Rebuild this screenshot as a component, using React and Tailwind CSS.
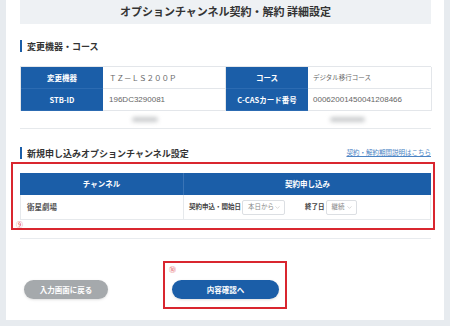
import { ChevronDown } from 'lucide-react';

const jp = "font-['Noto_Sans_CJK_JP','Noto_Sans',sans-serif]";

function Heading({ children }) {
  return (
    <div className="flex items-center h-[12px]">
      <span className="w-[2px] h-[12px] bg-[#1b5ea8]" />
      <span className="ml-[5px] text-[9px] font-bold text-[#333] leading-none">{children}</span>
    </div>
  );
}

function Label({ children }) {
  return (
    <div className="h-[22px] bg-[#1b5ea8] border-b border-[#2c6bb2] flex items-center justify-center text-white font-bold text-[7.5px] whitespace-nowrap">
      {children}
    </div>
  );
}

function Value({ children, pl = 'pl-[6px]' }) {
  return (
    <div className={`h-[22px] bg-white border-r border-b border-[#e3e6ea] flex items-center text-[#666] text-[7.5px] whitespace-nowrap ${pl}`}>
      {children}
    </div>
  );
}

function Select({ label, w }) {
  return (
    <div className={`ml-[1px] h-[15px] border border-[#dcdfe3] rounded-[2px] flex items-center justify-between pl-[5px] pr-[3px] bg-white whitespace-nowrap ${w}`}>
      <span className="text-[6.5px] text-[#888]">{label}</span>
      <ChevronDown size={7} strokeWidth={1.5} className="text-[#aaa] shrink-0" />
    </div>
  );
}

export default function App() {
  return (
    <div className={`w-[450px] h-[326px] bg-[#e7ebef] px-[6px] overflow-hidden ${jp}`}>
      <div className="h-[320px] bg-white pl-[14px] pr-[13px] flex flex-col">
        <div className="h-[24px] bg-[#eef1f4] flex items-center justify-center pb-[2px]">
          <span className="text-[11px] font-bold text-[#333]">オプションチャンネル契約・解約 詳細設定</span>
        </div>

        <div className="mt-[16px]">
          <Heading>変更機器・コース</Heading>
        </div>

        <div className="mt-[14px] grid grid-cols-[82px_123px_82px_124px] border-t border-l border-[#e3e6ea]">
          <Label>変更機器</Label>
          <Value>ＴＺ－ＬＳ２００Ｐ</Value>
          <Label>コース</Label>
          <Value pl="pl-[5px]"><span className="text-[6.5px]">デジタル移行コース</span></Value>
          <Label>STB-ID</Label>
          <Value><span className="font-['Liberation_Sans',sans-serif] text-[8px]">196DC3290081</span></Value>
          <Label>C-CASカード番号</Label>
          <Value pl="pl-[5px]"><span className="font-['Liberation_Sans',sans-serif] text-[8px]">00062001450041208466</span></Value>
        </div>

        <div className="h-[18px] grid grid-cols-[82px_123px_82px_124px] border-b border-[#e6e9ec]">
          <div />
          <div className="flex items-center pl-[30px]">
            <span className="w-[26px] h-[5px] rounded-full bg-[#c9cbcd] blur-[2px]" />
          </div>
          <div />
          <div className="flex items-center pl-[23px]">
            <span className="w-[35px] h-[5px] rounded-full bg-[#c9cbcd] blur-[2px]" />
          </div>
        </div>

        <div className="mt-[18px] flex items-center justify-between">
          <Heading>新規申し込みオプションチャンネル設定</Heading>
          <span className="text-[6.5px] text-[#4a83c4] underline">契約・解約期間説明はこちら</span>
        </div>

        <div className="mt-[3px] -ml-[9px] -mr-[4px] h-[68px] border-2 border-[#d9262f] pt-[9px] pl-[7px] pr-[2px]">
          <div className="grid grid-cols-[164px_1fr]">
            <div className="h-[22px] bg-[#1b5ea8] border-r border-[#3a74b6] flex items-center justify-center text-white font-bold text-[7.5px]">チャンネル</div>
            <div className="h-[22px] bg-[#1b5ea8] flex items-center justify-center text-white font-bold text-[7.5px]">契約申し込み</div>
            <div className="h-[25px] bg-white border-l border-r border-b border-[#e6e9ec] flex items-center pl-[6px] text-[7.5px] font-bold text-[#555]">衛星劇場</div>
            <div className="h-[25px] bg-white border-r border-b border-[#e6e9ec] flex items-center pl-[5px] whitespace-nowrap">
              <span className="text-[6.5px] font-bold text-[#444]">契約申込・開始日</span>
              <Select label="本日から" w="w-[43px]" />
              <span className="ml-[20px] text-[6.5px] font-bold text-[#444]">終了日</span>
              <Select label="継続" w="w-[31px]" />
            </div>
          </div>
          <div className="-ml-[4px] h-[8px] flex items-center text-[7px] text-[#e0474c] leading-none">⑨</div>
        </div>

        <div className="mt-[8px] border-t border-[#e8ebee]" />

        <div className="mt-[22px] flex items-end">
          <div className="ml-[4px] mb-[10px] w-[84px] h-[19px] rounded-full bg-[#a5a9ac] shadow-sm flex items-center justify-center text-white text-[7.5px] font-bold">
            入力画面に戻る
          </div>
          <div className="ml-[55px] w-[124px] h-[48px] border-2 border-[#d9262f] pl-[7px] pt-[3px]">
            <div className="h-[14px] -ml-[3px] text-[7px] text-[#e0474c] leading-none">⑩</div>
            <div className="w-[107px] h-[19px] rounded-full bg-[#1b5ea8] shadow-sm flex items-center justify-center text-white text-[7.5px] font-bold">
              内容確認へ
            </div>
          </div>
        </div>
      </div>
    </div>
  );
}
